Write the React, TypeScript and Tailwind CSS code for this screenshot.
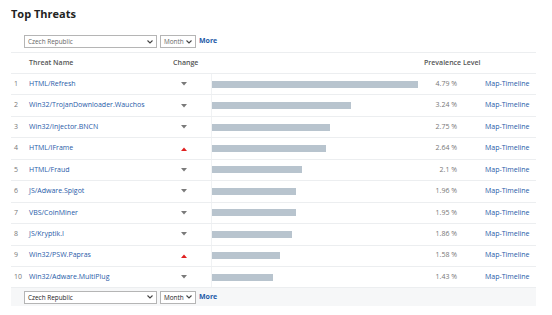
import React from "react";

const threats = [
  { name: "HTML/Refresh", up: false, pct: "4.79 %", v: 4.79 },
  { name: "Win32/TrojanDownloader.Wauchos", up: false, pct: "3.24 %", v: 3.24 },
  { name: "Win32/Injector.BNCN", up: false, pct: "2.75 %", v: 2.75 },
  { name: "HTML/IFrame", up: true, pct: "2.64 %", v: 2.64 },
  { name: "HTML/Fraud", up: false, pct: "2.1 %", v: 2.1 },
  { name: "JS/Adware.Spigot", up: false, pct: "1.96 %", v: 1.96 },
  { name: "VBS/CoinMiner", up: false, pct: "1.95 %", v: 1.95 },
  { name: "JS/Kryptik.I", up: false, pct: "1.86 %", v: 1.86 },
  { name: "Win32/PSW.Papras", up: true, pct: "1.58 %", v: 1.58 },
  { name: "Win32/Adware.MultiPlug", up: false, pct: "1.43 %", v: 1.43 },
];

function Chevron() {
  return (
    <svg width="6" height="4" viewBox="0 0 6 4" className="shrink-0">
      <path d="M0.5 0.5 L3 3 L5.5 0.5" fill="none" stroke="#444" strokeWidth="1.1" />
    </svg>
  );
}

function Selectors({ dark }: { dark?: boolean }) {
  const text = dark ? "text-[#222]" : "text-[#666]";
  return (
    <div className="flex items-center gap-[3px]">
      <div className={`flex h-[13px] w-[133px] items-center justify-between border border-[#b5b5b5] bg-white pl-[3px] pr-[3px] text-[6.4px] ${text}`}>
        <span>Czech Republic</span>
        <Chevron />
      </div>
      <div className={`flex h-[13px] w-[36px] items-center justify-between border border-[#b5b5b5] bg-white pl-[3px] pr-[3px] text-[6.4px] ${text}`}>
        <span>Month</span>
        <Chevron />
      </div>
      <span className="text-[7px] font-bold text-[#1f5ba8]">More</span>
    </div>
  );
}

function Arrow({ up }: { up: boolean }) {
  return up ? (
    <svg width="6" height="4" viewBox="0 0 6 4">
      <path d="M0 4 L3 0.5 L6 4 Z" fill="#e02020" />
    </svg>
  ) : (
    <svg width="6" height="4" viewBox="0 0 6 4">
      <path d="M0 0 L3 3.5 L6 0 Z" fill="#7a7a7a" />
    </svg>
  );
}

export default function App() {
  return (
    <div className="h-[315px] w-[552px] overflow-hidden bg-white font-['Open_Sans',sans-serif]">
      <div className="px-[11px]">
        <h1 className="pt-[6px] text-[11px] font-bold leading-[16px] text-[#222]">Top Threats</h1>
        <div className="mt-[13px] pl-[13px]">
          <Selectors />
        </div>
        <div className="mt-[4px] w-[525px] border-t border-[#eceef0]">
          <div className="flex h-[21px] items-center whitespace-nowrap border-b border-[#eceef0] text-[7px] font-semibold text-[#555]">
            <div className="w-[18px]" />
            <div className="w-[144px]">Threat Name</div>
            <div className="w-[251px]">Change</div>
            <div>Prevalence Level</div>
          </div>
          {threats.map((t, i) => (
            <div
              key={t.name}
              className="flex h-[21.45px] items-center whitespace-nowrap border-b border-[#eceef0] text-[7px]"
            >
              <div className="w-[18px] pl-[3px] text-[#777]">{i + 1}</div>
              <div className="w-[144px] text-[#1f5ba8]">{t.name}</div>
              <div className="flex w-[22px] justify-center">
                <Arrow up={t.up} />
              </div>
              <div className="w-[16px]" />
              <div className="flex h-full w-[216px] items-center border-l border-[#f0f2f4]">
                <div className="h-[7px] bg-[#b8c4ce]" style={{ width: `${t.v * 43}px` }} />
              </div>
              <div className="w-[30px] text-right text-[#777]">{t.pct}</div>
              <div className="pl-[28px] text-[#1f5ba8]">Map-Timeline</div>
            </div>
          ))}
          <div className="flex h-[18px] items-center bg-[#f6f7f8] pl-[13px]">
            <Selectors dark />
          </div>
        </div>
      </div>
    </div>
  );
}
